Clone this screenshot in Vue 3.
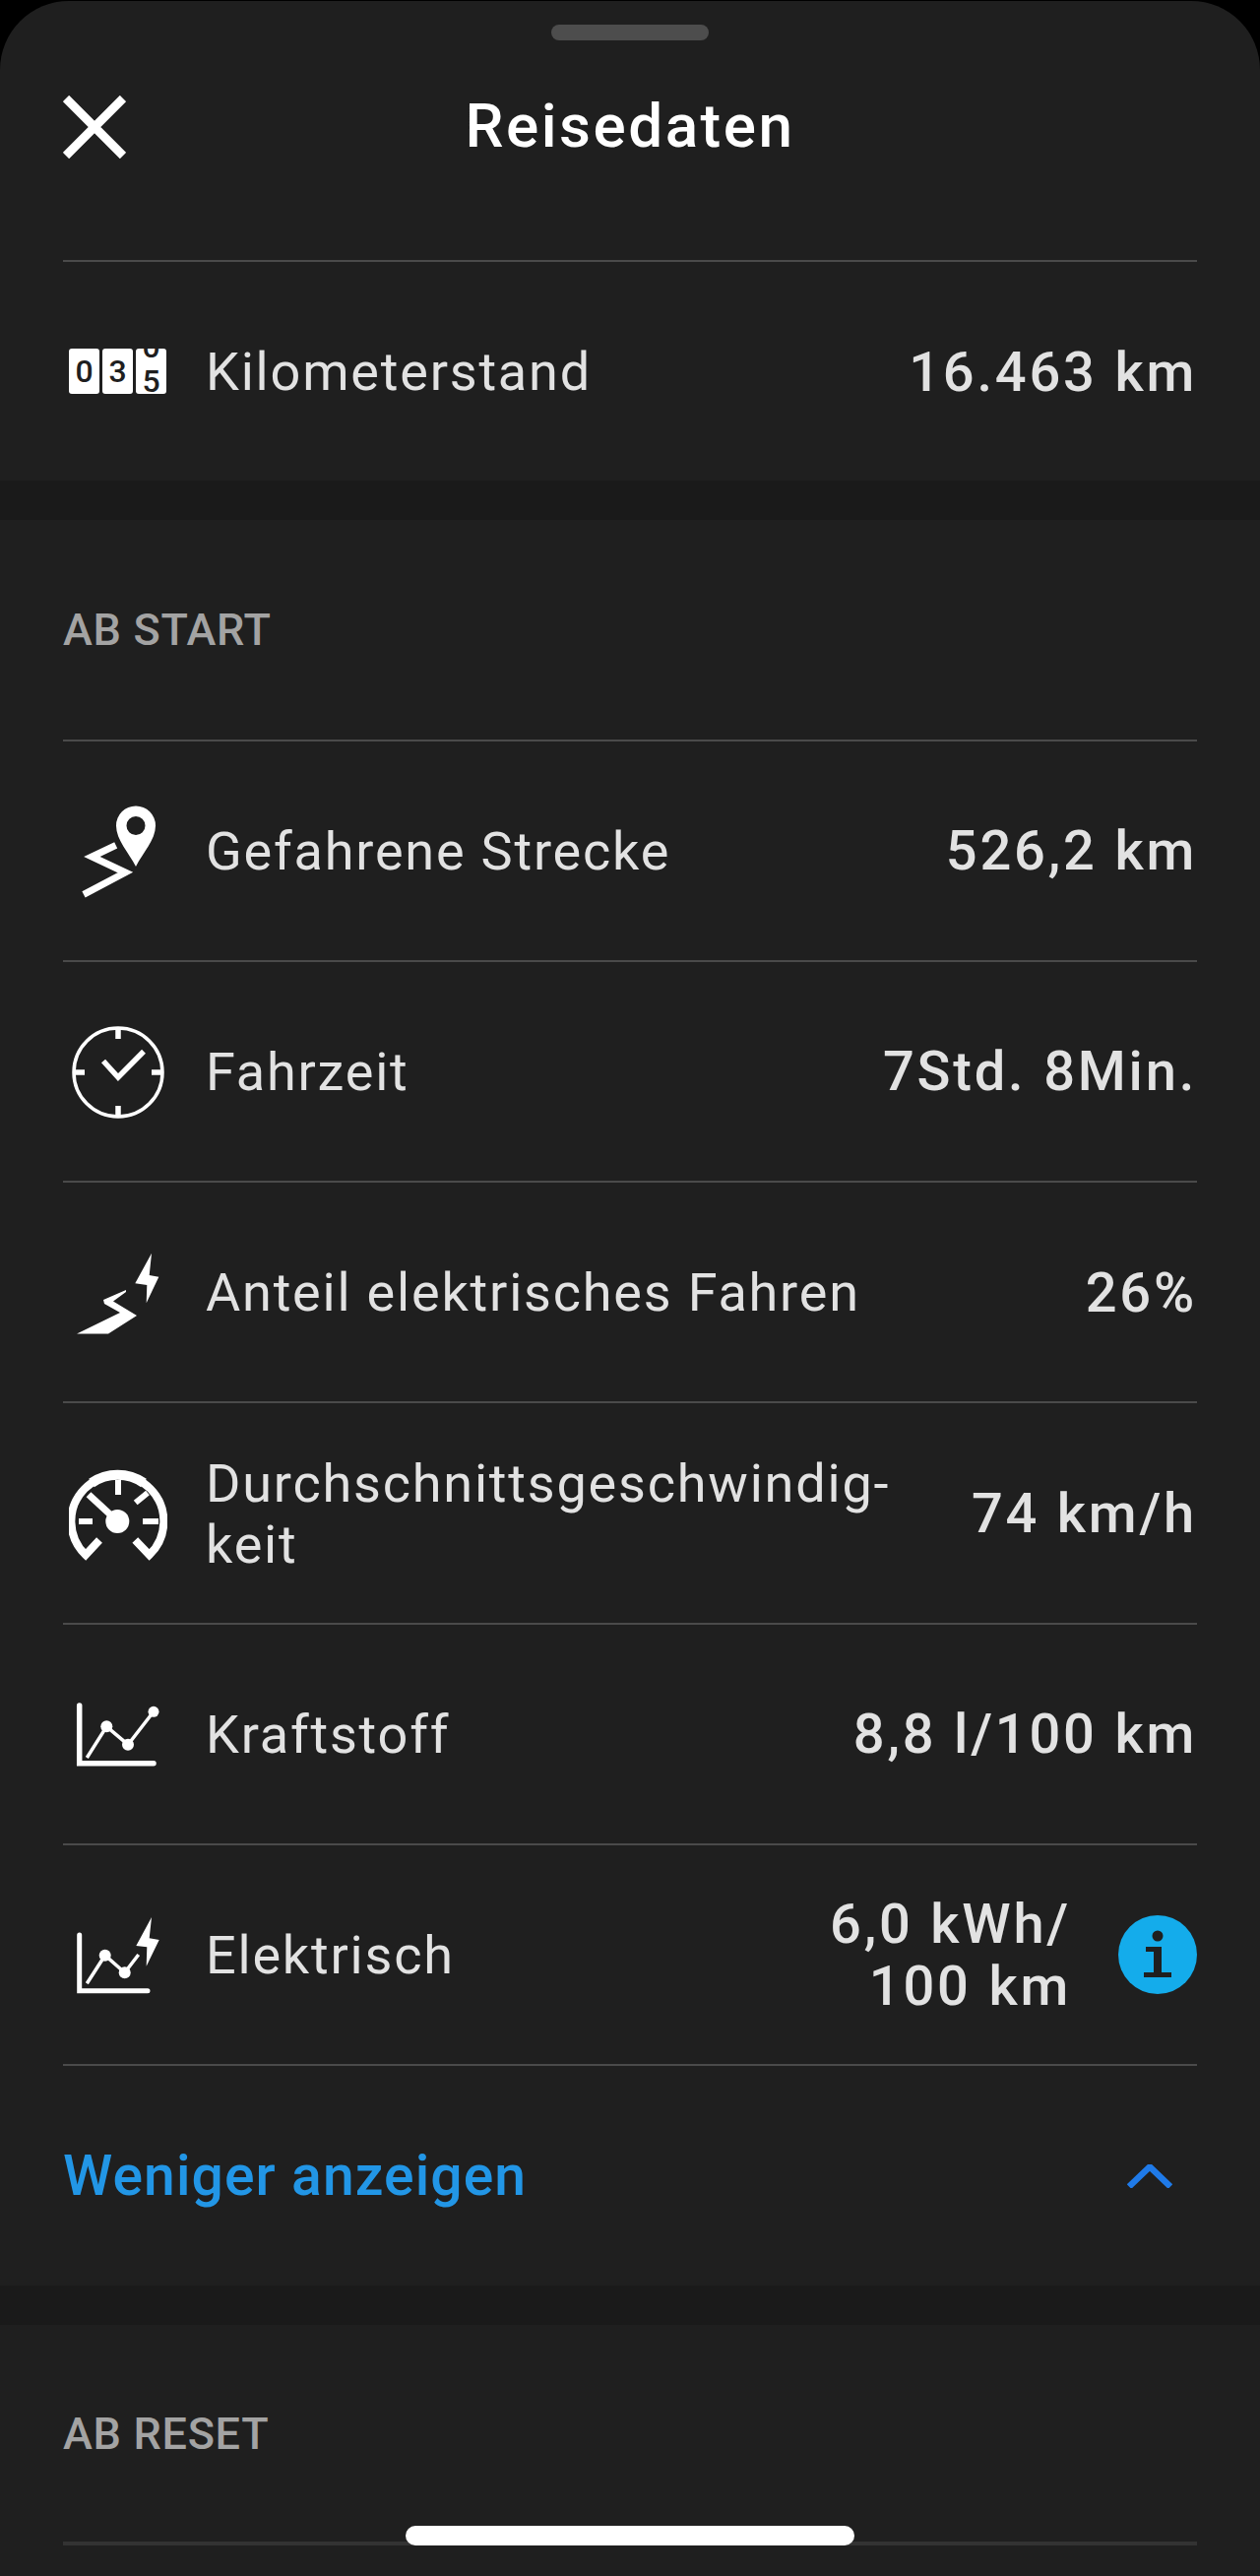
<template>
  <div class="sheet">
    <div class="handle"></div>
    <header class="head">
      <svg class="close" viewBox="0 0 64 64" width="64" height="64">
        <path d="M3 3L61 61M61 3L3 61" fill="none" stroke="#fff" stroke-width="9" />
      </svg>
      <h1 class="title">Reisedaten</h1>
    </header>

    <section class="block first">
      <div class="row">
        <div class="icon odo">
          <span class="tile">0</span>
          <span class="tile">3</span>
          <span class="tile roll"><i>0</i><i>5</i></span>
        </div>
        <span class="name">Kilometerstand</span>
        <span class="value">16.463 km</span>
      </div>
    </section>

    <div class="band"></div>

    <section class="block">
      <div class="label">AB START</div>
      <div v-for="row in rows" :key="row.id" class="row line">
        <div class="icon">
          <svg v-if="row.id === 'route'" viewBox="20 14 100 100" width="100" height="100">
            <path fill="#fff" fill-rule="evenodd" d="M88 80C81 66 68 53 68 38.5A20 20 0 0 1 108 38.5C108 53 95 66 88 80ZM88 29A9.5 9.5 0 1 0 88 48A9.5 9.5 0 1 0 88 29Z" />
            <path fill="none" stroke="#fff" stroke-width="7" d="M67.7 58.3L43.3 70L77.3 86L35 108.3" />
          </svg>
          <svg v-else-if="row.id === 'time'" viewBox="20 18 100 100" width="100" height="100">
            <g fill="none" stroke="#fff">
              <circle cx="70" cy="69" r="45" stroke-width="3.5" />
              <path stroke-width="5.5" d="M70 25V35M70 103V113M25 69H36M104 69H115M55 57.5L70 74L96 47.7" />
            </g>
          </svg>
          <svg v-else-if="row.id === 'electric'" viewBox="20 12 100 100" width="100" height="100">
            <path fill="#fff" d="M104 22.7L87.3 53.3L99.3 55L98.7 73.3L111.3 46.7L101.7 45Z" />
            <path fill="#fff" d="M78 60L55 70L56 74L72 83L28 104.5H60L89 86L65 71.5L78 62Z" />
          </svg>
          <svg v-else-if="row.id === 'speed'" viewBox="20 16 100 100" width="100" height="100">
            <g fill="none" stroke="#fff">
              <path stroke-width="8" d="M51 93L37 108A47 47 0 1 1 101.7 108L87.3 93" />
              <path stroke-width="10" d="M43 35A47 47 0 0 1 96 35" />
              <path stroke-width="6" d="M70 32V47M87.7 55L100 45M30 74H44M95 74H111" />
              <path stroke-width="7" d="M40 46.7L63 68" />
            </g>
            <circle cx="69.3" cy="74" r="12" fill="#fff" />
          </svg>
          <svg v-else-if="row.id === 'fuel'" viewBox="20 11 100 100" width="100" height="100">
            <path fill="none" stroke="#fff" stroke-width="5.5" stroke-linecap="round" d="M30.7 32V90.7H106" />
            <path fill="none" stroke="#fff" stroke-width="3.5" d="M38.3 85L58.3 53.3L80 71.7L106 38.3" />
            <g fill="#fff">
              <circle cx="58.3" cy="53.3" r="6" />
              <circle cx="80" cy="71.7" r="6" />
              <circle cx="106" cy="38.3" r="5.5" />
            </g>
          </svg>
          <svg v-else viewBox="20 15 100 100" width="100" height="100">
            <path fill="none" stroke="#fff" stroke-width="5" stroke-linecap="round" d="M30.7 45V101.7H100" />
            <path fill="none" stroke="#fff" stroke-width="3.5" d="M38.3 94.3L56.7 65.7L76.7 83.3L90.7 65" />
            <g fill="#fff">
              <circle cx="56.7" cy="65.7" r="6" />
              <circle cx="76.7" cy="83.3" r="6" />
            </g>
            <path fill="#fff" d="M104 27L88.3 56L99.3 57.3L98.7 76.7L111.7 50L101.7 48.3Z" />
          </svg>
        </div>
        <span class="name">{{ row.name }}</span>
        <span class="value" :class="{ narrow: row.info }">{{ row.value }}</span>
        <svg v-if="row.info" class="info" viewBox="0 0 80 80" width="80" height="80">
          <circle cx="40" cy="40" r="40" fill="#14aceb" />
          <circle cx="40" cy="21" r="5.5" fill="#1f1f1f" />
          <path fill="#1f1f1f" d="M28 32H44V58H54V63H26V58H36V37H28Z" />
        </svg>
      </div>
      <div class="row line more">
        <span class="more-text">Weniger anzeigen</span>
        <svg class="chevron" viewBox="0 0 46 24" width="46" height="24">
          <path fill="none" stroke="#1f7ae8" stroke-width="6.5" d="M2 22.5L23 2.5L44 22.5" />
        </svg>
      </div>
    </section>

    <div class="band"></div>

    <section class="block">
      <div class="label last">AB RESET</div>
    </section>

    <div class="home"></div>
  </div>
</template>

<script setup>
// Zeilen der Reisedaten ab Start
const rows = [
  { id: 'route', name: 'Gefahrene Strecke', value: '526,2 km' },
  { id: 'time', name: 'Fahrzeit', value: '7Std. 8Min.' },
  { id: 'electric', name: 'Anteil elektrisches Fahren', value: '26%' },
  { id: 'speed', name: 'Durchschnittsgeschwindig\u00ADkeit', value: '74 km/h' },
  { id: 'fuel', name: 'Kraftstoff', value: '8,8 l/\u200B100 km' },
  { id: 'power', name: 'Elektrisch', value: '6,0 kWh/\u200B100 km', info: true }
]
</script>

<style>
html,
body {
  background: #000;
}
</style>

<style scoped>
.sheet {
  position: relative;
  box-sizing: border-box;
  width: 1280px;
  height: 2616px;
  overflow: hidden;
  margin-top: 1px;
  padding-top: 24px;
  background: #1f1f1f;
  border-radius: 70px 70px 0 0;
  font-family: Roboto, sans-serif;
  color: #e2e2e2;
}

.handle {
  width: 160px;
  height: 16px;
  margin: 0 auto;
  border-radius: 8px;
  background: #4d4d4d;
}

.head {
  position: relative;
  display: flex;
  align-items: center;
  justify-content: center;
  height: 64px;
  margin: 56px 64px 0;
}

.close {
  position: absolute;
  left: 0;
  top: 0;
}

.title {
  margin: 0;
  padding-bottom: 3px;
  font-size: 62px;
  font-weight: 500;
  line-height: 64px;
  letter-spacing: 2.5px;
  color: #fff;
}

.block {
  padding: 0 64px;
}

.first {
  margin-top: 103px;
}

.first .row {
  height: 224px;
  border-top: 2px solid #4a4a4a;
}

.row {
  box-sizing: border-box;
  display: flex;
  align-items: center;
  height: 224.33px;
}

.line {
  border-top: 2px solid #4a4a4a;
}

.icon {
  flex: none;
  width: 100px;
  height: 100px;
  margin: 0 39px 0 6px;
}

.odo {
  display: flex;
  gap: 3px;
  align-items: center;
}

.tile {
  display: flex;
  align-items: center;
  justify-content: center;
  width: 31px;
  height: 46px;
  background: #fff;
  border-radius: 3px;
  font-size: 32px;
  font-weight: 500;
  line-height: 1;
  color: #1f1f1f;
}

.roll {
  flex-direction: column;
  justify-content: flex-start;
  overflow: hidden;
}

.roll i {
  flex: none;
  height: 35px;
  font-style: normal;
  line-height: 35px;
  transform: translateY(-19px);
}

.name {
  flex: 1;
  min-width: 0;
  padding-top: 2px;
  font-size: 54px;
  line-height: 62px;
  letter-spacing: 1.8px;
}

.value {
  flex: none;
  margin-left: 40px;
  padding-top: 2px;
  font-size: 56px;
  font-weight: 500;
  line-height: 63px;
  letter-spacing: 2.8px;
  word-spacing: 1px;
  text-align: right;
}

.value.narrow {
  width: 270px;
}

.info {
  flex: none;
  margin-left: 48px;
}

.band {
  height: 40px;
  background: #1a1a1a;
}

.label {
  display: flex;
  align-items: center;
  height: 222.5px;
  padding-top: 1px;
  box-sizing: border-box;
  font-size: 45px;
  font-weight: 500;
  letter-spacing: 0.7px;
  color: #a3a3a3;
}

.label.last {
  height: 224.5px;
  border-bottom: 4px solid #333;
}

.more {
  justify-content: space-between;
}

.more-text {
  font-size: 57px;
  font-weight: 500;
  letter-spacing: 1.1px;
  color: #2296e6;
}

.chevron {
  margin-right: 25px;
}

.home {
  position: absolute;
  left: 412px;
  top: 2564px;
  width: 456px;
  height: 20px;
  border-radius: 10px;
  background: #fff;
}
</style>
